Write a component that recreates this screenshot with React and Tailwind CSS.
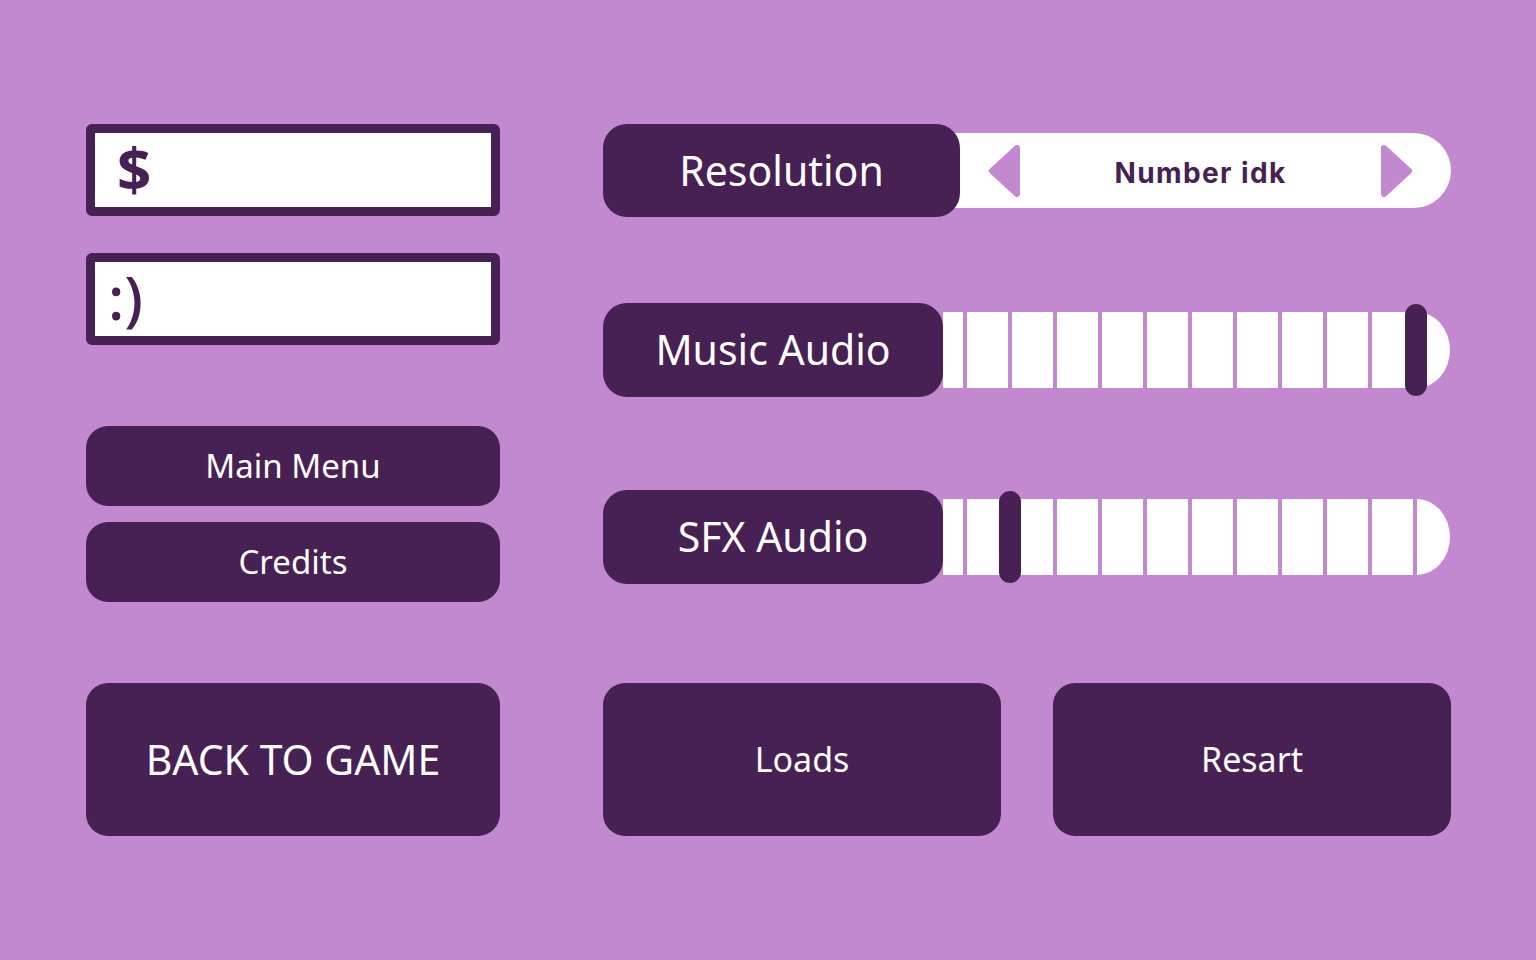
import React from 'react';

const DARK = 'bg-[#472153]';

function Arrow({ dir }) {
  const d = dir === 'left' ? 'M29 4 L4 27 L29 50 Z' : 'M4 4 L29 27 L4 50 Z';
  return (
    <svg width="33" height="54" viewBox="0 0 33 54">
      <path d={d} fill="#c289d1" stroke="#c289d1" strokeWidth="6" strokeLinejoin="round" />
    </svg>
  );
}

function Label({ children, className = '' }) {
  return (
    <div className={`relative z-10 shrink-0 ${DARK} rounded-[24px] flex items-center justify-center text-white text-[41px] ${className}`}>
      {children}
    </div>
  );
}

function Slider({ label, handle }) {
  const segs = [0, 1, 2, 3, 4, 5, 6, 7, 8, 9];
  return (
    <div className="flex items-center h-[94px]">
      <Label className="w-[340px] h-[94px]">{label}</Label>
      <div className="relative flex gap-[4px] h-[76px]">
        <div className="w-[20px] h-full bg-white" />
        {segs.map(i => (
          <div key={i} className="w-[41px] h-full bg-white" />
        ))}
        <div className="w-[33px] h-full bg-white rounded-r-[33px_38px]" />
        <div className={`absolute top-[-8px] w-[22px] h-[92px] rounded-full ${DARK} ${handle}`} />
      </div>
    </div>
  );
}

function Field({ children, className = '' }) {
  return (
    <div className={`h-[92px] border-[9px] border-[#472153] rounded-[6px] bg-white flex items-center text-[#472153] text-[60px] leading-none ${className}`}>
      {children}
    </div>
  );
}

function Btn({ children, className = '' }) {
  return (
    <div className={`${DARK} rounded-[22px] flex items-center justify-center text-white ${className}`}>
      {children}
    </div>
  );
}

export default function App() {
  return (
    <div className="w-[1536px] h-[960px] bg-[#c289d1] overflow-hidden font-['Noto_Sans',sans-serif]">
      <div className="flex gap-[103px] pl-[86px] pt-[124px]">
        <div className="w-[414px] flex flex-col">
          <Field className="pl-[22px] font-bold pb-[4px]">$</Field>
          <Field className="mt-[37px] pl-[13px] font-medium pb-[4px]">:)</Field>
          <Btn className="mt-[81px] h-[80px] text-[33px]">Main Menu</Btn>
          <Btn className="mt-[16px] h-[80px] text-[33px]">Credits</Btn>
          <Btn className="mt-[81px] h-[153px] text-[41px]">BACK TO GAME</Btn>
        </div>

        <div className="w-[848px] flex flex-col">
          <div className="flex items-center h-[93px]">
            <Label className="w-[357px] h-[93px]">Resolution</Label>
            <div className="flex-1 -ml-[30px] h-[75px] bg-white rounded-r-full flex items-center justify-between pl-[58px] pr-[38px]">
              <Arrow dir="left" />
              <span className="pt-[4px] font-['Inter',sans-serif] font-bold text-[28px] tracking-[0.05em] text-[#472153]">Number idk</span>
              <Arrow dir="right" />
            </div>
          </div>

          <div className="mt-[86px]">
            <Slider label="Music Audio" handle="left-[462px]" />
          </div>
          <div className="mt-[93px]">
            <Slider label="SFX Audio" handle="left-[56px]" />
          </div>

          <div className="mt-[99px] flex gap-[52px]">
            <Btn className="w-[398px] h-[153px] text-[34px]">Loads</Btn>
            <Btn className="w-[398px] h-[153px] text-[34px]">Resart</Btn>
          </div>
        </div>
      </div>
    </div>
  );
}
